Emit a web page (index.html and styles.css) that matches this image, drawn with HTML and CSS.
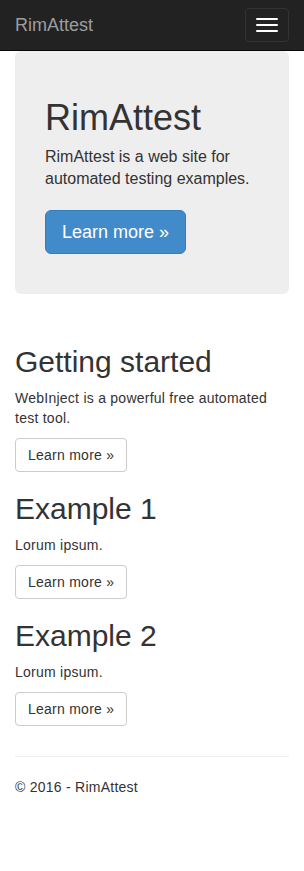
FILE: index.html
```html
<!DOCTYPE html>
<html lang="en">

<head>
  <meta charset="UTF-8">
  <meta name="viewport" content="width=device-width, initial-scale=1.0">
  <title>Home Page - RimAttest</title>
  <link rel="stylesheet" href="styles.css">
</head>

<body>
  <nav class="navbar">
    <div class="navbar-inner">
      <a class="brand" href="#">RimAttest</a>
      <button class="toggle" type="button" aria-label="Toggle navigation">
        <span class="bar"></span>
        <span class="bar"></span>
        <span class="bar"></span>
      </button>
    </div>
  </nav>

  <div class="container">
    <div class="jumbotron">
      <h1>RimAttest</h1>
      <p class="lead">RimAttest is a web site for automated testing examples.</p>
      <div class="jumbo-actions">
        <a class="btn btn-lg btn-primary" href="#">Learn more &raquo;</a>
      </div>
    </div>

    <div class="features">
      <div class="col">
        <h2>Getting started</h2>
        <p>WebInject is a powerful free automated test tool.</p>
        <p><a class="btn" href="#">Learn more &raquo;</a></p>
      </div>
      <div class="col">
        <h2>Example 1</h2>
        <p>Lorum ipsum.</p>
        <p><a class="btn" href="#">Learn more &raquo;</a></p>
      </div>
      <div class="col">
        <h2>Example 2</h2>
        <p>Lorum ipsum.</p>
        <p><a class="btn" href="#">Learn more &raquo;</a></p>
      </div>
    </div>

    <hr>
    <footer>
      <p>&copy; 2016 - RimAttest</p>
    </footer>
  </div>
</body>

</html>
```

FILE: styles.css
```css
body {
  margin: 0;
  font-family: "Liberation Sans", Arial, sans-serif;
  font-size: 14px;
  line-height: 20px;
  letter-spacing: 0.25px;
  color: #333;
  background: #fff;
}

/* top bar */
.navbar {
  background: #222;
  border-bottom: 1px solid #080808;
}

.navbar-inner {
  display: flex;
  justify-content: space-between;
  align-items: flex-start;
  height: 50px;
  padding: 0 15px;
}

.brand {
  padding: 15px 0;
  font-size: 18px;
  line-height: 20px;
  letter-spacing: 0;
  color: #9d9d9d;
  text-decoration: none;
}

.toggle {
  display: flex;
  flex-direction: column;
  gap: 4px;
  margin-top: 8px;
  padding: 9px 10px;
  background: transparent;
  border: 1px solid #333;
  border-radius: 4px;
  cursor: pointer;
}

.toggle .bar {
  display: block;
  width: 22px;
  height: 2px;
  background: #fff;
  border-radius: 1px;
}

/* page */
.container {
  padding: 0 15px;
}

.jumbotron {
  margin-bottom: 31px;
  padding: 30px 30px 40px;
  background: #eee;
  border-radius: 6px;
}

.jumbotron h1 {
  margin: 17px 0 8px;
  font-size: 36px;
  font-weight: 500;
  line-height: 40px;
  letter-spacing: 0;
}

.lead {
  margin: 0 0 20px;
  font-size: 16px;
  line-height: 22px;
  letter-spacing: 0;
}

.jumbo-actions {
  display: flex;
}

.btn {
  display: inline-block;
  padding: 6px 12px;
  font-size: 14px;
  line-height: 20px;
  color: #333;
  text-decoration: none;
  background: #fff;
  border: 1px solid #ccc;
  border-radius: 4px;
}

.btn-lg {
  padding: 10px 16px;
  font-size: 18px;
  line-height: 22px;
  letter-spacing: 0;
  border-radius: 6px;
}

.btn-primary {
  color: #fff;
  background: #428bca;
  border-color: #357ebd;
}

.features {
  display: flow-root;
}

.features h2 {
  margin: 20px 0 10px;
  font-size: 30px;
  font-weight: 500;
  line-height: 33px;
  letter-spacing: 0;
}

.features p {
  margin: 0 0 10px;
}

hr {
  margin: 20px 0;
  border: 0;
  border-top: 1px solid #eee;
}

footer p {
  margin: 0 0 10px;
}
```
